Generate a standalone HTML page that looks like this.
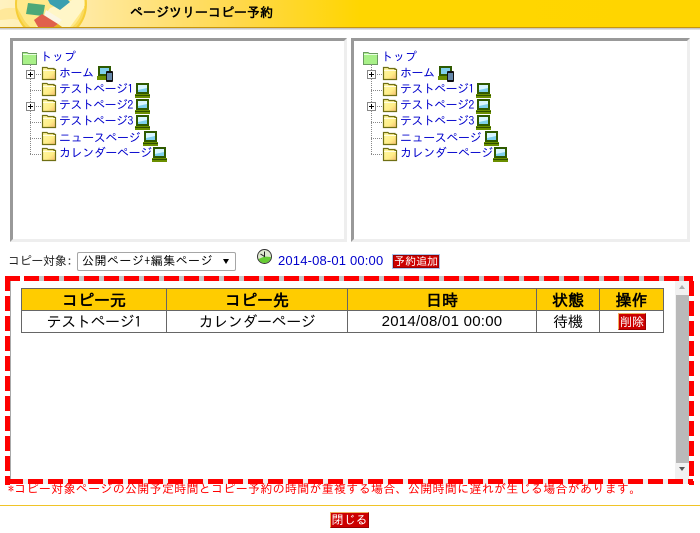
<!DOCTYPE html>
<html lang="ja"><head><meta charset="utf-8"><title>ページツリーコピー予約</title>
<style>
html,body{margin:0;padding:0;background:#fff}
body{position:relative;width:700px;height:533px;overflow:hidden;font-family:"Liberation Sans","IPAGothic","Noto Sans CJK JP",sans-serif;font-size:12px;color:#000}
.a{position:absolute;white-space:nowrap}
.j{font-family:"IPAGothic","Noto Sans CJK JP",sans-serif}
.panel{position:absolute;top:38px;height:198px;background:#fff;border-style:solid;border-width:3px;border-color:#999 #eee #eee #999}
.tree{position:absolute;left:0;top:0;width:350px;height:170px}
.t{position:absolute;white-space:nowrap;color:#00c;font:12px/16px "IPAGothic","Noto Sans CJK JP",sans-serif;left:59px}
.i{position:absolute}
.v{position:absolute;left:30px;top:64px;height:90px;border-left:1px dotted #888}
.h{position:absolute;left:30px;width:11px;border-top:1px dotted #888}
.p{position:absolute;left:26px;width:7px;height:7px;border:1px solid #888;background:#fff;font:0/0 a}
.p:before{content:"";position:absolute;left:1px;top:3px;width:5px;height:1px;background:#000}
.p:after{content:"";position:absolute;left:3px;top:1px;width:1px;height:5px;background:#000}
.btn{position:absolute;background:#c00;color:#fff;text-align:center;font-family:"IPAGothic","Noto Sans CJK JP",sans-serif;box-sizing:border-box;white-space:nowrap}
.dh{position:absolute;height:5px;background:repeating-linear-gradient(90deg,#f00 0,#f00 15px,#c8c8c8 15px,#c8c8c8 20px)}
.dv{position:absolute;width:5px;background:repeating-linear-gradient(180deg,#f00 0,#f00 15px,#fff 15px,#fff 20px)}
.th,.td{position:absolute;text-align:center;font-family:"IPAGothic","Noto Sans CJK JP",sans-serif;white-space:nowrap}
.th{top:290px;height:20px;line-height:21px;font-size:16px;font-weight:bold}
.td{top:311px;height:21px;line-height:21px;font-size:15px}
.l{position:absolute;background:#666}
</style></head><body>
<svg width="0" height="0" style="position:absolute">
<defs><linearGradient id="gy" x1="0" y1="0" x2="1" y2="1"><stop offset="0" stop-color="#fff8a8"/><stop offset=".6" stop-color="#ffee88"/><stop offset="1" stop-color="#f5bb70"/></linearGradient></defs>
<symbol id="fy" viewBox="0 0 16 16"><path d="M1.500 4V2.500H6L7 3.500H13V4.500H14.500V14.500H1.500Z" fill="url(#gy)" stroke="#6f6f14" stroke-width="1.200"/><path d="M2 5.500H14" stroke="#fffde0"/></symbol>
<symbol id="fg" viewBox="0 0 16 14"><path d="M.5 3V1.500H5L6.500 2.500H14.500V13.500H.5Z" fill="#a8f088" stroke="#6a9a60"/><path d="M1 3.500H14.500" stroke="#e8ffe0"/></symbol>
<symbol id="m" viewBox="0 0 15 15"><rect x="1" y="0" width="13" height="11" fill="#2f5a00"/><rect x="3" y="2" width="9" height="7" fill="#7fd0ec"/><path d="M3 2H12V5L3 7Z" fill="#d8f6ff"/><rect x="0" y="11" width="15" height="4" fill="#6b8f00"/><rect x="0" y="12" width="15" height="1" fill="#2f4f00"/></symbol>
<symbol id="mm" viewBox="0 0 16 16"><rect x="1" y="0" width="13" height="10" fill="#2f5a00"/><rect x="3" y="2" width="9" height="6" fill="#7fd0ec"/><rect x="0" y="10" width="11" height="4" fill="#6b8f00"/><rect x="9" y="5" width="7" height="11" rx="1" fill="#111"/><rect x="10" y="7" width="5" height="7" fill="#6688aa"/></symbol>
</svg>

<!-- header -->
<div class="a" style="left:0;top:0;width:700px;height:27px;background:linear-gradient(90deg,#fff2c0 0,#ffe9a0 90px,#ffd84a 240px,#ffd600 360px,#ffd500 700px)"></div>
<svg class="a" style="left:0;top:0" width="100" height="27" viewBox="0 0 100 27">
<path d="M0 10C6 7 12 8 18 8V20C12 18 6 20 0 20Z" fill="#ffe48a" opacity=".7"/>
<circle cx="51" cy="4" r="35" fill="#ffe98a" stroke="#f6cf3a" stroke-width="2"/>
<path d="M16 6A35 35 0 0 0 86 6L83 6A32 32 0 0 1 22 16Z" fill="#f6cb34" opacity=".5"/>
<path d="M36 27L50 8L72 0L84 0V8L70 27Z" fill="#fff6c8"/>
<path d="M48 0H68L70 2L60 10L50 4Z" fill="#3a9fb0"/>
<path d="M28 3L45 5L43 16L26 14Z" fill="#4da878"/>
<path d="M46 10L62 20L58 24L44 16Z" fill="#fbf6e4"/>
<path d="M42 14L58 24L54 27H38L34 20Z" fill="#e0604c"/>
<path d="M58 24L62 27H54Z" fill="#e8b020"/>
</svg>
<div class="a" style="left:0;top:27px;width:700px;height:1px;background:#c8960c"></div>
<div class="a" style="left:0;top:28px;width:700px;height:2px;background:linear-gradient(#bbb,#eee)"></div>
<div class="a j" style="left:130px;top:5px;font-size:13px;line-height:15px;font-weight:bold">ページツリーコピー予約</div>

<!-- panels -->
<div class="panel" style="left:10px;width:331px"></div>
<div class="panel" style="left:351px;width:333px"></div>

<!-- tree left -->
<div class="tree" style="left:0">
<svg class="i" style="left:22px;top:51px" width="16" height="14"><use href="#fg"/></svg>
<div class="t" style="left:40px;top:49px">トップ</div>
<div class="v"></div>
<div class="h" style="top:74px"></div><div class="h" style="top:90px"></div><div class="h" style="top:106px"></div><div class="h" style="top:122px"></div><div class="h" style="top:138px"></div><div class="h" style="top:154px"></div>
<div class="p" style="top:70px"></div><div class="p" style="top:102px"></div>
<svg class="i" style="left:41px;top:65px" width="16" height="16"><use href="#fy"/></svg>
<svg class="i" style="left:41px;top:81px" width="16" height="16"><use href="#fy"/></svg>
<svg class="i" style="left:41px;top:97px" width="16" height="16"><use href="#fy"/></svg>
<svg class="i" style="left:41px;top:113px" width="16" height="16"><use href="#fy"/></svg>
<svg class="i" style="left:41px;top:130px" width="16" height="16"><use href="#fy"/></svg>
<svg class="i" style="left:41px;top:146px" width="16" height="16"><use href="#fy"/></svg>
<div class="t" style="top:65px;letter-spacing:-.5px">ホーム</div>
<div class="t" style="top:81px;letter-spacing:-.6px">テストページ1</div>
<div class="t" style="top:97px;letter-spacing:-.6px">テストページ2</div>
<div class="t" style="top:113px;letter-spacing:-.6px">テストページ3</div>
<div class="t" style="top:130px;letter-spacing:-.4px">ニュースページ</div>
<div class="t" style="top:145px;letter-spacing:-.4px">カレンダーページ</div>
<svg class="i" style="left:97px;top:66px" width="16" height="16"><use href="#mm"/></svg>
<svg class="i" style="left:135px;top:83px" width="15" height="15"><use href="#m"/></svg>
<svg class="i" style="left:135px;top:99px" width="15" height="15"><use href="#m"/></svg>
<svg class="i" style="left:135px;top:115px" width="15" height="15"><use href="#m"/></svg>
<svg class="i" style="left:143px;top:131px" width="15" height="15"><use href="#m"/></svg>
<svg class="i" style="left:152px;top:147px" width="15" height="15"><use href="#m"/></svg>
</div>
<!-- tree right -->
<div class="tree" style="left:341px">
<svg class="i" style="left:22px;top:51px" width="16" height="14"><use href="#fg"/></svg>
<div class="t" style="left:40px;top:49px">トップ</div>
<div class="v"></div>
<div class="h" style="top:74px"></div><div class="h" style="top:90px"></div><div class="h" style="top:106px"></div><div class="h" style="top:122px"></div><div class="h" style="top:138px"></div><div class="h" style="top:154px"></div>
<div class="p" style="top:70px"></div><div class="p" style="top:102px"></div>
<svg class="i" style="left:41px;top:65px" width="16" height="16"><use href="#fy"/></svg>
<svg class="i" style="left:41px;top:81px" width="16" height="16"><use href="#fy"/></svg>
<svg class="i" style="left:41px;top:97px" width="16" height="16"><use href="#fy"/></svg>
<svg class="i" style="left:41px;top:113px" width="16" height="16"><use href="#fy"/></svg>
<svg class="i" style="left:41px;top:130px" width="16" height="16"><use href="#fy"/></svg>
<svg class="i" style="left:41px;top:146px" width="16" height="16"><use href="#fy"/></svg>
<div class="t" style="top:65px;letter-spacing:-.5px">ホーム</div>
<div class="t" style="top:81px;letter-spacing:-.6px">テストページ1</div>
<div class="t" style="top:97px;letter-spacing:-.6px">テストページ2</div>
<div class="t" style="top:113px;letter-spacing:-.6px">テストページ3</div>
<div class="t" style="top:130px;letter-spacing:-.4px">ニュースページ</div>
<div class="t" style="top:145px;letter-spacing:-.4px">カレンダーページ</div>
<svg class="i" style="left:97px;top:66px" width="16" height="16"><use href="#mm"/></svg>
<svg class="i" style="left:135px;top:83px" width="15" height="15"><use href="#m"/></svg>
<svg class="i" style="left:135px;top:99px" width="15" height="15"><use href="#m"/></svg>
<svg class="i" style="left:135px;top:115px" width="15" height="15"><use href="#m"/></svg>
<svg class="i" style="left:143px;top:131px" width="15" height="15"><use href="#m"/></svg>
<svg class="i" style="left:152px;top:147px" width="15" height="15"><use href="#m"/></svg>
</div>

<!-- select row -->
<div class="a j" style="left:8px;top:254px;font-size:12px;line-height:14px;letter-spacing:-.3px;color:#222">コピー対象:</div>
<div class="a j" style="left:77px;top:252px;width:159px;height:19px;box-sizing:border-box;border:1px solid #a6a6a6;border-radius:2px;font-size:12px;line-height:17px;padding-left:4px;color:#000;letter-spacing:.45px">公開ページ+編集ページ</div>
<div class="a" style="left:223px;top:259px;width:0;height:0;border-left:3.500px solid transparent;border-right:3.500px solid transparent;border-top:5px solid #000"></div>
<svg class="a" style="left:257px;top:249px" width="15" height="15" viewBox="0 0 15 15"><circle cx="7.500" cy="7.500" r="7" fill="#dfe8d0" stroke="#333" stroke-width="1"/><path d="M7.500 7.500L14 8A6.500 6.500 0 0 1 1.500 10Z" fill="#66cc33"/><path d="M7.500 2.500V7.500L3.500 5" stroke="#222" fill="none"/></svg>
<div class="a" style="left:278px;top:253px;font-size:13px;line-height:15px;color:#00c;letter-spacing:.17px">2014-08-01 00:00</div>
<div class="btn" style="left:392px;top:254px;width:48px;height:15px;font-size:11px;line-height:14px;border:1px solid #a8c4ec;box-shadow:inset 0 0 0 1px #900">予約追加</div>

<!-- dashed box -->
<div class="a" style="left:10px;top:281px;width:680px;height:198px;background:#fff;border-left:1px solid #aaa;box-sizing:border-box"></div>
<div class="dh" style="left:24px;top:276px;width:669px"></div>
<div class="dv" style="left:5px;top:276px;height:209px"></div>
<div class="a" style="left:5px;top:276px;width:15px;height:5px;background:#f00;border-radius:3px 0 0 0"></div>
<div class="dv" style="left:689px;top:281px;height:204px"></div>
<div class="dh" style="left:8px;top:479px;width:685px;background:repeating-linear-gradient(90deg,#f00 0,#f00 15px,#f0f0f0 15px,#f0f0f0 20px)"></div>

<!-- scrollbar -->
<div class="a" style="left:675px;top:281px;width:14px;height:198px;background:#f1f1f1"></div>
<div class="a" style="left:676px;top:295px;width:13px;height:168px;background:#b9b9b9"></div>
<div class="a" style="left:679px;top:285px;width:0;height:0;border-left:3.500px solid transparent;border-right:3.500px solid transparent;border-bottom:4px solid #aaa"></div>
<div class="a" style="left:679px;top:467px;width:0;height:0;border-left:3.500px solid transparent;border-right:3.500px solid transparent;border-top:4px solid #555"></div>

<!-- table -->
<div class="a" style="left:21px;top:289px;width:643px;height:21px;background:#fc0"></div>
<div class="l" style="left:21px;top:288px;width:643px;height:1px"></div>
<div class="l" style="left:21px;top:310px;width:643px;height:1px"></div>
<div class="l" style="left:21px;top:332px;width:643px;height:1px"></div>
<div class="l" style="left:21px;top:288px;width:1px;height:45px"></div>
<div class="l" style="left:166px;top:288px;width:1px;height:45px"></div>
<div class="l" style="left:347px;top:288px;width:1px;height:45px"></div>
<div class="l" style="left:536px;top:288px;width:1px;height:45px"></div>
<div class="l" style="left:599px;top:288px;width:1px;height:45px"></div>
<div class="l" style="left:663px;top:288px;width:1px;height:45px"></div>
<div class="th" style="left:22px;width:144px">コピー元</div>
<div class="th" style="left:167px;width:180px">コピー先</div>
<div class="th" style="left:348px;width:188px">日時</div>
<div class="th" style="left:537px;width:62px">状態</div>
<div class="th" style="left:600px;width:63px">操作</div>
<div class="td" style="left:22px;width:144px;letter-spacing:-.4px">テストページ1</div>
<div class="td" style="left:167px;width:180px;letter-spacing:-.4px">カレンダーページ</div>
<div class="td" style="left:348px;width:188px;font-family:'Liberation Sans',sans-serif;font-size:15px;letter-spacing:.25px">2014/08/01 00:00</div>
<div class="td" style="left:537px;width:62px">待機</div>
<div class="btn" style="left:618px;top:313px;width:28px;height:17px;font-size:12px;line-height:16px;border-top:1px solid #f0b060;border-left:1px solid #f0b060;border-bottom:1px solid #900;border-right:1px solid #900">削除</div>

<!-- note & footer -->
<div class="a j" style="left:8px;top:482px;font-size:12px;line-height:14px;color:#f00;letter-spacing:.3px">*コピー対象ページの公開予定時間とコピー予約の時間が重複する場合、公開時間に遅れが生じる場合があります。</div>
<div class="a" style="left:0;top:505px;width:700px;height:1px;background:#f0c428"></div>
<div class="btn" style="left:330px;top:512px;width:39px;height:16px;font-size:12px;line-height:15px;border-top:1px solid #f0b060;border-left:1px solid #f0b060;border-bottom:1px solid #900;border-right:1px solid #900">閉じる</div>
</body></html>
